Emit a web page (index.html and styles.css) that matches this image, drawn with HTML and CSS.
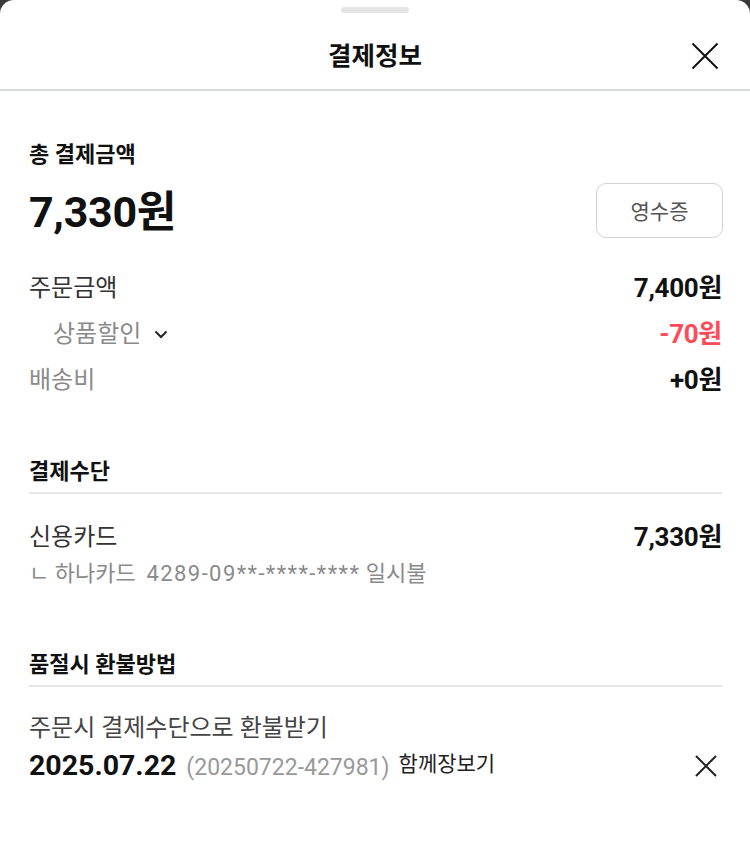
FILE: index.html
```html
<!DOCTYPE html>
<html lang="ko">
<head>
<meta charset="utf-8">
<link rel="stylesheet" href="styles.css">
</head>
<body>
<div class="sheet">
  <div class="handle"></div>
  <header class="head">
    <h1 class="title">결제정보</h1>
    <button class="close" aria-label="닫기">
      <svg width="28" height="28" viewBox="0 0 28 28"><path d="M1.5 1.5L26.5 26.5M26.5 1.5L1.5 26.5" stroke="#111" stroke-width="2" fill="none"/></svg>
    </button>
  </header>

  <section class="total">
    <div class="label-strong">총 결제금액</div>
    <div class="total-row">
      <div class="total-amount">7,330원</div>
      <button class="receipt">영수증</button>
    </div>
    <div class="lines">
      <div class="line">
        <span class="l-dark">주문금액</span>
        <span class="v">7,400원</span>
      </div>
      <div class="line">
        <span class="l-gray indent">상품할인
          <svg class="chev" width="16" height="10" viewBox="0 0 16 10"><path d="M2.5 2.5L8 8L13.5 2.5" stroke="#222" stroke-width="2" fill="none"/></svg>
        </span>
        <span class="v red">-70원</span>
      </div>
      <div class="line">
        <span class="l-gray">배송비</span>
        <span class="v">+0원</span>
      </div>
    </div>
  </section>

  <section class="block">
    <div class="block-title">결제수단</div>
    <div class="block-body">
      <div class="line">
        <span class="l-dark">신용카드</span>
        <span class="v">7,330원</span>
      </div>
      <div class="card-detail">ㄴ 하나카드&nbsp; <span class="card-no">4289-09**-****-****</span> 일시불</div>
    </div>
  </section>

  <section class="block">
    <div class="block-title">품절시 환불방법</div>
    <div class="block-body tight">
      <div class="refund">주문시 결제수단으로 환불받기</div>
      <div class="order-row">
        <div class="order-info">
          <span class="date">2025.07.22</span>
          <span class="order-no">(20250722-427981)</span>
          <span class="store">함께장보기</span>
        </div>
        <svg class="x-small" width="22" height="22" viewBox="0 0 22 22"><path d="M1 1L21 21M21 1L1 21" stroke="#222" stroke-width="2" fill="none"/></svg>
      </div>
    </div>
  </section>
</div>
</body>
</html>
```

FILE: styles.css
```css
* { box-sizing: border-box; }
html, body { margin: 0; padding: 0; }
body {
  background: #3a3a3a;
  font-family: "Roboto", "Noto Sans CJK KR", "Noto Sans", sans-serif;
  color: #111;
  width: 750px;
  height: 848px;
  overflow: hidden;
}
.sheet {
  background: #fff;
  width: 750px;
  height: 848px;
  border-radius: 14px 14px 0 0;
  padding-top: 7px;
}
.handle {
  width: 68px;
  height: 6px;
  border-radius: 3px;
  background: #e4e4e4;
  margin: 0 auto;
}
.head {
  height: 78px;
  padding-top: 10px;
  display: flex;
  align-items: center;
  justify-content: center;
  border-bottom: 2px solid #d7dadc;
  position: relative;
}
.title {
  margin: 0;
  font-size: 25.5px;
  font-weight: 700;
  line-height: 32px;
}
.close {
  position: absolute;
  right: 31px;
  top: 29px;
  background: none;
  border: 0;
  padding: 0;
  width: 28px;
  height: 28px;
}
.close svg { display: block; }

.total { padding: 50px 28px 0 29px; }
.label-strong {
  font-size: 22px;
  font-weight: 700;
  line-height: 28px;
}
.total-row {
  display: flex;
  justify-content: space-between;
  align-items: center;
  margin-top: 13px;
  height: 56px;
}
.total-amount {
  font-size: 43px;
  font-weight: 700;
  line-height: 56px;
  letter-spacing: -0.3px;
  padding-top: 3px;
}
.receipt {
  width: 127px;
  height: 55px;
  border: 1.5px solid #d2d2d2;
  border-radius: 10px;
  background: #fff;
  font-family: inherit;
  font-size: 21px;
  color: #555;
  margin-right: -1px;
}
.lines { margin-top: 35px; display: flex; flex-direction: column; gap: 16px; }
.line {
  display: flex;
  justify-content: space-between;
  align-items: center;
  height: 30px;
}
.l-dark { font-size: 24px; color: #333; line-height: 30px; }
.l-gray { font-size: 24px; color: #8a8a8a; line-height: 30px; display: inline-flex; align-items: center; }
.indent { padding-left: 24px; }
.chev { margin-left: 12px; }
.v { font-size: 26px; font-weight: 700; color: #111; line-height: 30px; letter-spacing: -0.3px; }
.red { color: #ff4b57; }

.block { padding: 0 28px 0 29px; margin-top: 63px; }
.block-title {
  font-size: 22px;
  font-weight: 700;
  line-height: 28px;
  padding-bottom: 6px;
  border-bottom: 2px solid #e6e6e6;
}
.block-body { padding-top: 28px; }
.block-body.tight { padding-top: 26px; }
.card-detail {
  font-size: 22px;
  color: #8a8a8a;
  margin-top: 8px;
  line-height: 28px;
}
.card-no { letter-spacing: 1.4px; }
.refund { font-size: 24px; color: #444; line-height: 30px; }
.order-row {
  display: flex;
  justify-content: space-between;
  align-items: center;
  margin-top: 6px;
  height: 34px;
}
.order-info { display: flex; align-items: baseline; gap: 10px; }
.date { font-size: 28.5px; font-weight: 700; color: #111; line-height: 34px; }
.order-no { font-size: 23px; color: #999; }
.store { font-size: 21px; color: #222; align-self: flex-start; margin-top: -2px; margin-left: -1px; }
.x-small { margin-right: 5px; display: block; }
```
